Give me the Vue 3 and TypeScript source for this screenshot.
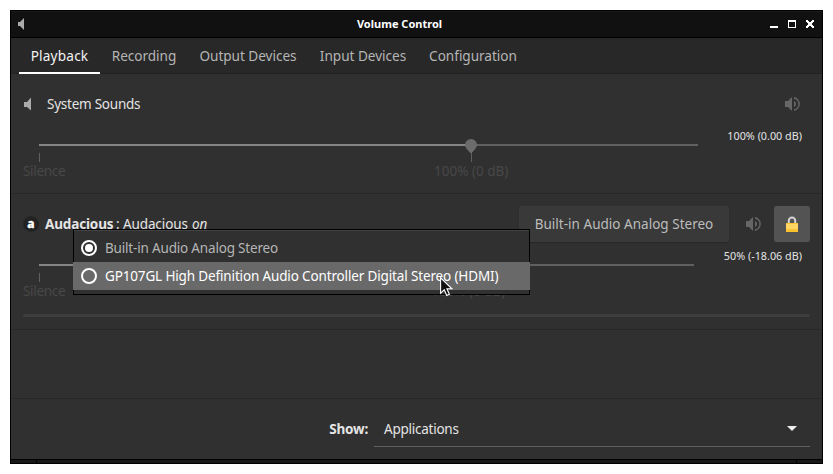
<script setup lang="ts">
import { ref } from 'vue'

interface Tab { name: string; width: number }

const tabs: Tab[] = [
  { name: 'Playback', width: 81 },
  { name: 'Recording', width: 88 },
  { name: 'Output Devices', width: 120 },
  { name: 'Input Devices', width: 110 },
  { name: 'Configuration', width: 110 },
]
const active = ref('Playback')

const outputs = [
  'Built-in Audio Analog Stereo',
  'GP107GL High Definition Audio Controller Digital Stereo (HDMI)',
]
const selected = ref(0)
const hovered = ref(1)
</script>

<template>
  <div class="desktop">
    <div class="window">
      <header class="titlebar">
        <svg class="app-icon" width="16" height="16" viewBox="0 0 16 16"><path d="M1 6h2l4-4v12l-4-4H1z" fill="#aaa" /></svg>
        <span class="title">Volume Control</span>
        <svg class="controls" width="46" height="10" viewBox="0 0 46 10" shape-rendering="crispEdges">
          <path d="M0 7h8v2H0z" fill="#fff" />
          <path d="M18 1h8v8h-8zM19 3v5h6V3z" fill="#fff" fill-rule="evenodd" />
          <path d="M36 1h2v1h1v1h2V2h1V1h2v2h-1v1h-1v2h1v1h1v2h-2V8h-1V7h-2v1h-1v1h-2V7h1V6h1V4h-1V3h-1z" fill="#fff" />
        </svg>
      </header>

      <nav class="tabs">
        <button
          v-for="tab in tabs"
          :key="tab.name"
          class="tab"
          :class="{ active: tab.name === active }"
          :style="{ width: tab.width + 'px' }"
          @click="active = tab.name"
        ><span>{{ tab.name }}</span></button>
      </nav>

      <main class="streams">
        <section class="stream">
          <div class="head">
            <svg class="source" width="16" height="16" viewBox="0 0 16 16"><path d="M1 6h3l4-4.500v13L4 11H1z" fill="#aaa" /></svg>
            <span class="name sys">System Sounds</span>
            <span class="spacer"></span>
            <svg class="speaker" width="16" height="16" viewBox="0 0 16 16" fill="#666"><path d="M1 5h3l4-4v14l-4-4H1zM10 5q2 1 2 3t-2 3zM10 1.100a7 7 0 0 1 0 13.800v-1.600a5.400 5.400 0 0 0 0-10.600z" /></svg>
          </div>
          <div class="level">
            <div class="scale">
              <div class="track"><i class="fill"></i><i class="rest"></i>
                <svg class="knob" width="12" height="14" viewBox="0 0 12 14"><path d="M6 0a6 6 0 0 1 6 6q0 2-2 4.200L6.700 14H5.300L2 10.200Q0 8 0 6a6 6 0 0 1 6-6z" fill="#6c6c6c" /></svg>
              </div>
              <div class="ticks"><i></i><i class="mid"></i></div>
              <div class="marks"><span class="silence">Silence</span><span class="full">100% (0 dB)</span></div>
            </div>
            <span class="value">100% (0.00 dB)</span>
          </div>
        </section>

        <section class="stream second">
          <div class="head">
            <svg class="source" width="16" height="16" viewBox="0 0 16 16"><circle cx="8" cy="8" r="7.800" fill="#222" /><text x="8" y="11.800" text-anchor="middle" class="glyph">a</text></svg>
            <span class="name app"><b>Audacious</b><span class="detail">: Audacious</span><em>on</em></span>
            <span class="spacer"></span>
            <button class="device"><span>Built-in Audio Analog Stereo</span></button>
            <svg class="mute" width="16" height="16" viewBox="0 0 16 16" fill="#666"><path d="M1 5h3l4-4v14l-4-4H1zM10 5q2 1 2 3t-2 3zM10 1.100a7 7 0 0 1 0 13.800v-1.600a5.400 5.400 0 0 0 0-10.600z" /></svg>
            <button class="lock">
              <svg width="16" height="16" viewBox="0 0 16 16"><path d="M4.800 8V4.800a3.200 3.200 0 0 1 6.400 0V8" fill="none" stroke="#d4d4d4" stroke-width="2" /><path d="M2 7h12v9H2z" fill="#f9c32f" /><path d="M2 8h12v5H2z" fill="#ffd663" /></svg>
            </button>
          </div>
          <div class="level">
            <div class="scale">
              <div class="track"><i class="fill"></i><i class="rest"></i></div>
              <div class="ticks"><i></i><i class="mid"></i></div>
              <div class="marks"><span class="silence">Silence</span><span class="full">100% (0 dB)</span></div>
            </div>
            <span class="value">50% (-18.06 dB)</span>
          </div>
          <div class="meter"></div>
        </section>
      </main>

      <footer class="filter">
        <label><span>Show:</span></label>
        <div class="combo"><span>Applications</span>
          <svg width="10" height="5" viewBox="0 0 10 5"><path d="M0 0h10L5 5z" fill="#eee" /></svg>
        </div>
      </footer>
      <div class="grip"><i></i><i></i><i></i></div>
    </div>

    <div class="menu">
      <div
        v-for="(item, i) in outputs"
        :key="item"
        class="item"
        :class="{ hover: i === hovered }"
        @click="selected = i"
      >
        <svg width="16" height="16" viewBox="0 0 16 16"><circle cx="8" cy="8" r="7" fill="none" stroke="#fff" stroke-width="2" /><circle v-if="i === selected" cx="8" cy="8" r="4" fill="#fff" /></svg>
        <span>{{ item }}</span>
      </div>
    </div>
    <svg class="cursor" width="14" height="20" viewBox="0 0 14 20"><path d="M.6.8v15.500l3.600-3.500 2.500 5.700 2.700-1.200-2.500-5.500h5z" fill="#111" stroke="#fff" stroke-width="1.100" /></svg>
  </div>
</template>

<style>
body { background: #fff; }
</style>

<style scoped>
* { box-sizing: border-box; }
.desktop { position: relative; width: 833px; height: 474px; padding: 10px; overflow: hidden; background: #fff; font: 13.5px/20px "Noto Sans", sans-serif; color: #e4e4e4; white-space: nowrap; }
svg { display: block; flex: none; }
button { border: 0; padding: 0; background: none; font: inherit; color: inherit; }
.window { width: 813px; height: 454px; border: 1px solid #000; background: #303030; display: flex; flex-direction: column; }
.titlebar { height: 27px; flex: none; border-bottom: 1px solid #000; background: #111; box-shadow: inset 0 1px #1b1b1b; display: grid; grid-template-columns: 60px 1fr 60px; align-items: center; }
.app-icon { margin-left: 6px; }
.title { text-align: center; font-weight: 700; font-size: 11px; color: #fff; padding-right: 34px; }
.controls { margin-left: 8px; }
.tabs { height: 36px; flex: none; display: flex; padding-left: 8px; background: #282828; border-bottom: 1px solid #222; }
.tab { height: 36px; padding-top: 2px; color: #b5b5b5; text-align: center; border-bottom: 2px solid transparent; font-size: 13.6px; letter-spacing: -.03px; }
.tab.active { color: #f2f2f2; border-color: #fff; letter-spacing: .2px; }
.streams { height: 325px; border-bottom: 1px solid #282828; flex: none; }
.stream { height: 120px; border-bottom: 1px solid #282828; padding: 12px 12px 0; }
.second { height: 136px; }
.head { height: 36px; display: flex; align-items: center; }
.name { margin-left: 8px; }
.name.sys { letter-spacing: -.24px; }
.name.app { margin-left: 6px; display: flex; }
.name.app b { letter-spacing: -.15px; width: 71px; }
.detail { width: 76px; letter-spacing: -.1px; }
.glyph { font: 800 12px "Noto Sans", sans-serif; fill: #fff; stroke: #fff; stroke-width: .3px; }
.spacer { flex: 1; }
.speaker { margin-right: 10px; }
.device { width: 210px; height: 36px; background: #393939; color: #bcbcbc; border-radius: 2px; box-shadow: 0 1px 1px #292929; letter-spacing: .02px; }
.mute { margin: 0 13px 0 16px; }
.lock { width: 36px; height: 36px; border-radius: 2px; background: #535353; display: grid; place-items: center; }
.level { display: flex; height: 66px; justify-content: space-between; }
.scale { width: 659px; margin: 22px 0 0 16px; }
.second .scale { width: 655px; }
.track { height: 2px; display: flex; position: relative; }
.fill { width: 432px; background: #858585; }
.second .fill { width: 214px; }
.rest { flex: 1; background: #606060; }
.knob { position: absolute; left: 426px; top: -5px; }
.ticks { display: flex; height: 16px; padding-top: 7px; }
.ticks i { width: 1px; background: #606060; }
.ticks .mid { margin-left: 431px; }
.second .ticks .mid { margin-left: 428px; }
.marks { display: flex; color: #484848; margin-left: -16px; margin-top: -1px; }
.silence { width: 411px; letter-spacing: -.3px; }
.second .silence { width: 408px; }
.value { font-size: 10.8px; margin: 4px 8px 0 0; }
.meter { height: 3px; border-radius: 2px; background: #3d3d3d; margin-top: 6px; }
.filter { height: 60px; display: flex; padding: 12px 12px 0 0; }
.filter label { width: 357px; text-align: right; font-weight: 700; line-height: 36px; letter-spacing: -.2px; }
.combo { flex: 1; height: 36px; margin-left: 6px; padding: 0 13px 0 10px; border-bottom: 1px solid #606060; display: flex; align-items: center; justify-content: space-between; letter-spacing: -.24px; }
.grip { height: 4px; border-top: 1px solid #000; display: grid; grid-template-columns: 25px 1fr 25px; gap: 1px; background: #000; }
.grip i { background: #181818; }
.menu { position: absolute; left: 73px; top: 229px; width: 457px; height: 66px; padding: 4px 0; border: 1px solid #000; background: #303030; box-shadow: inset 0 1px #424242; }
.item { height: 28px; margin: 0 -1px; padding-left: 8px; display: flex; align-items: center; gap: 8px; color: #b5b5b5; letter-spacing: -.18px; }
.item.hover { background: #696969; color: #fff; letter-spacing: -.145px; }
.cursor { position: absolute; left: 440px; top: 277px; }
</style>
